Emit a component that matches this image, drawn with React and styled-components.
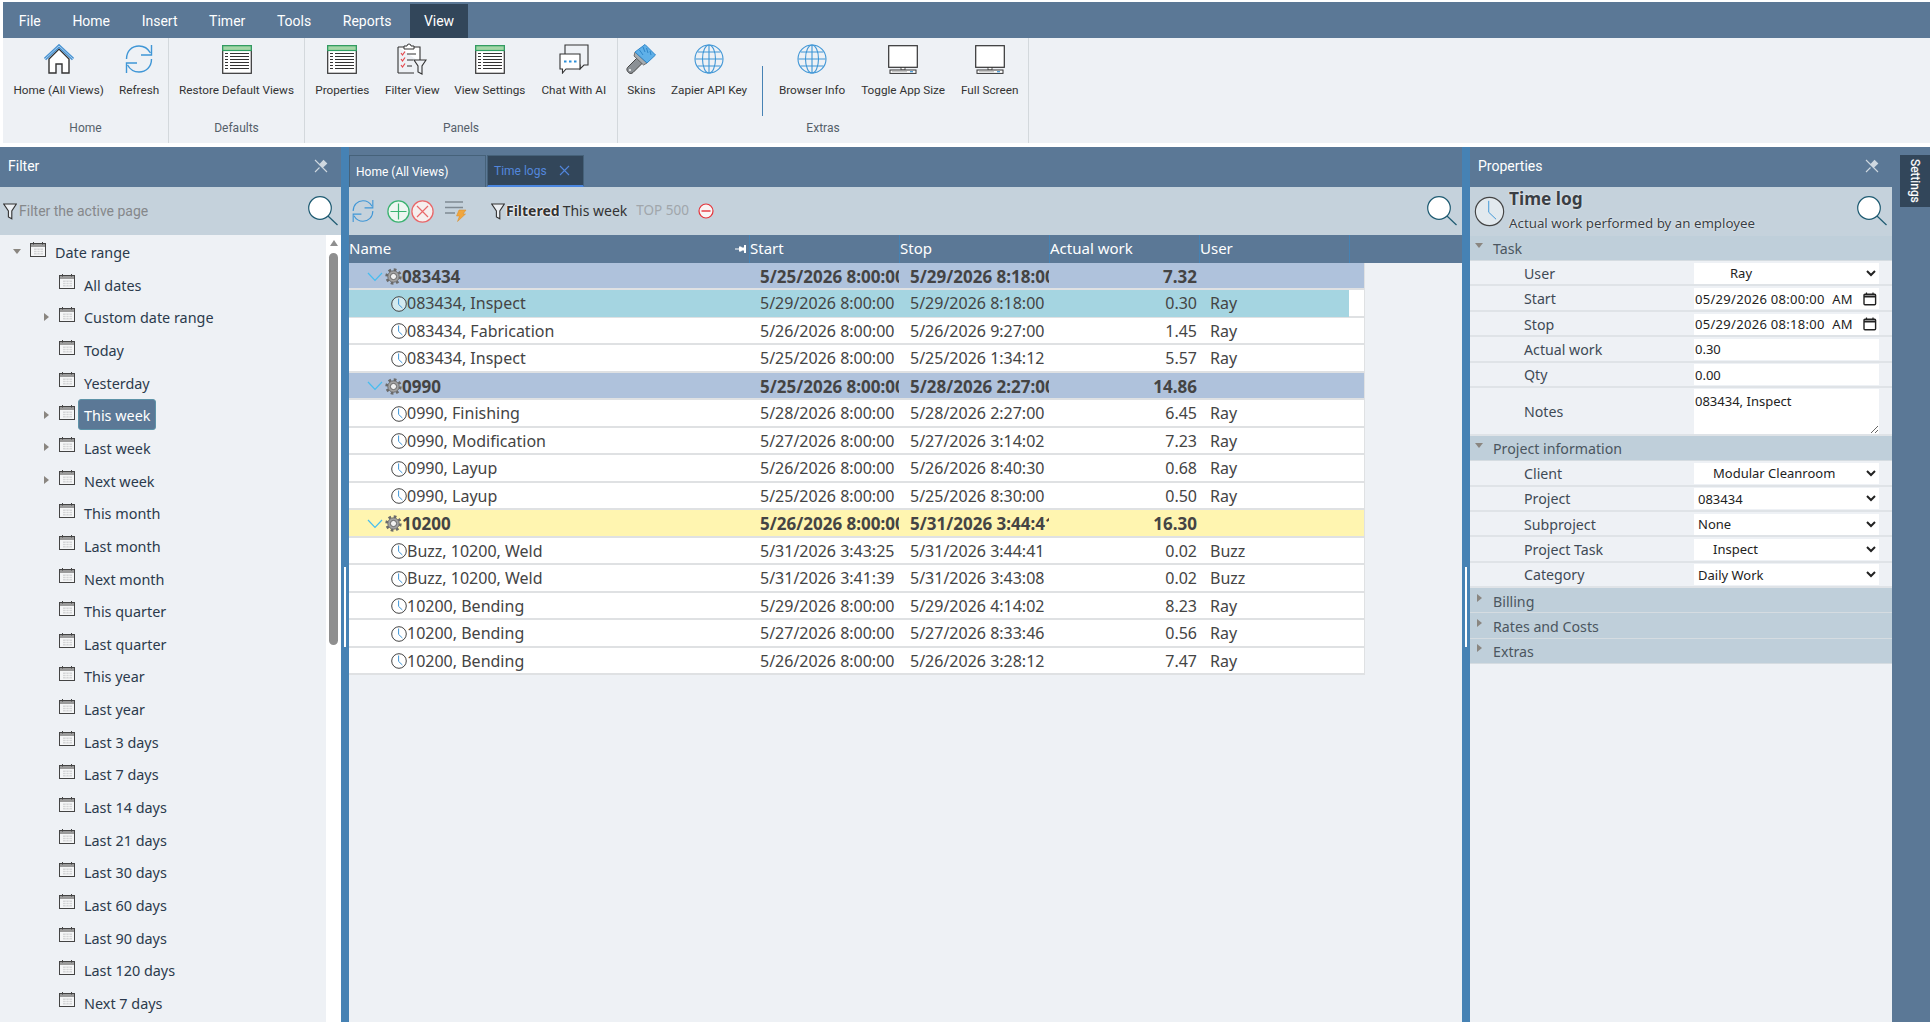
import React from "react";
import styled, { createGlobalStyle } from "styled-components";

const GlobalStyle = createGlobalStyle`
  html, body { margin: 0; padding: 0; background: #fff; }
  body { font-family: "Noto Sans", "Open Sans", sans-serif; overflow: hidden; }
  * { box-sizing: border-box; }
`;

const BLUE = "#5b7896";
const DARK = "#32465a";
const STEEL = "#4682b4";
const PALE = "#eef1f5";
const BAND = "#c5d2dc";

const Page = styled.div`
  width: 1930px;
  height: 1022px;
  display: flex;
  flex-direction: column;
  overflow: hidden;
`;

const Top = styled.div`
  padding: 2px 0 0 3px;
`;

const MenuBar = styled.div`
  height: 36px;
  background: ${BLUE};
  display: flex;
  align-items: flex-end;
`;

const MenuItem = styled.div`
  height: 34px;
  padding: 0 ${(p) => (p.$active ? "14px" : "15.8px")};
  margin-left: ${(p) => (p.$active ? "2.5px" : "0")};
  background: ${(p) => (p.$active ? DARK : "transparent")};
  color: #fff;
  font: 14px/34px Roboto, sans-serif;
`;

const Ribbon = styled.div`
  height: 105px;
  background: ${PALE};
  display: flex;
`;

const RibbonGroup = styled.div`
  display: flex;
  flex-direction: column;
  width: ${(p) => p.$w}px;
  padding: 0 2px;
  border-right: 1px solid #d3d8dc;
`;

const RibbonItems = styled.div`
  flex: 1;
  display: flex;
`;

const RibbonItem = styled.div`
  width: ${(p) => p.$w}px;
  display: flex;
  flex-direction: column;
  align-items: center;
  padding-top: 5px;
`;

const RibbonIcon = styled.div`
  height: 32px;
  display: flex;
  align-items: center;
  justify-content: center;
`;

const RibbonLabel = styled.div`
  margin-top: 7px;
  font: 11.75px/16px Roboto, sans-serif;
  color: #333;
  white-space: nowrap;
`;

const RibbonCaption = styled.div`
  height: 22px;
  text-align: center;
  font: 12px/14px Roboto, sans-serif;
  color: #55606a;
`;

const RibbonDivider = styled.div`
  width: 1px;
  height: 50px;
  margin: 28px 8px 0 7px;
  background: ${STEEL};
`;

const Workspace = styled.div`
  margin-top: 4px;
  flex: 1;
  min-height: 0;
  display: flex;
`;

const Panel = styled.div`
  width: ${(p) => p.$w}px;
  display: flex;
  flex-direction: column;
  background: ${PALE};
`;

const PanelHeader = styled.div`
  height: 40px;
  flex: none;
  background: ${BLUE};
  display: flex;
  align-items: center;
  justify-content: space-between;
  padding: 0 13px 2px 8px;
  color: #fff;
  font: 14px Roboto, sans-serif;
`;

const Band = styled.div`
  height: ${(p) => p.$h || 48}px;
  flex: none;
  background: ${BAND};
  display: flex;
  align-items: center;
`;

const SearchSlot = styled.div`
  margin-left: auto;
  margin-right: ${(p) => p.$right || 3}px;
  display: flex;
`;

const FilterHint = styled.span`
  margin-left: 2px;
  margin-bottom: 1px;
  font: 14px Roboto, sans-serif;
  color: #85888b;
`;

const TreeArea = styled.div`
  flex: 1;
  min-height: 0;
  display: flex;
`;

const Tree = styled.div`
  flex: 1;
  padding-top: 0.3px;
  overflow: hidden;
`;

const TreeRow = styled.div`
  height: 32.65px;
  display: flex;
  align-items: center;
  padding-left: ${(p) => 13 + p.$depth * 29}px;
`;

const ArrowSlot = styled.div`
  width: 17px;
  flex: none;
  display: flex;
  align-items: center;
`;

const TriDown = styled.span`
  border-left: 4px solid transparent;
  border-right: 4px solid transparent;
  border-top: 5px solid #8a8680;
`;

const TriRight = styled.span`
  margin-left: 2px;
  border-top: 4px solid transparent;
  border-bottom: 4px solid transparent;
  border-left: 5px solid #8a8680;
`;

const TreeIcon = styled.div`
  flex: none;
  display: flex;
  margin-bottom: 5px;
`;

const TreeLabel = styled.div`
  margin-left: 3px;
  padding: 0 5px;
  height: 31px;
  line-height: 31px;
  font-size: 14.4px;
  white-space: nowrap;
  border-radius: 3px;
  color: ${(p) => (p.$active ? "#fff" : "#2b3a4c")};
  background: ${(p) => (p.$active ? BLUE : "transparent")};
  border: 1px solid ${(p) => (p.$active ? "#5d93a8" : "transparent")};
`;

const ScrollTrack = styled.div`
  width: 15px;
  flex: none;
  background: #fff;
  padding: 5px 3px 0;
  display: flex;
  flex-direction: column;
  align-items: center;
`;

const ScrollArrow = styled.span`
  border-left: 4.5px solid transparent;
  border-right: 4.5px solid transparent;
  border-bottom: 6px solid #8f8f8f;
`;

const ScrollThumb = styled.div`
  width: 9px;
  height: 392px;
  margin-top: 7px;
  border-radius: 5px;
  background: #8f8f8f;
`;

const Splitter = styled.div`
  width: 8px;
  flex: none;
  background: ${STEEL};
  padding: 420px 0 0 3px;
`;

const Grip = styled.div`
  width: 2px;
  height: 80px;
  background: #fff;
`;

const Center = styled.div`
  flex: 1;
  min-width: 0;
  display: flex;
  flex-direction: column;
  background: ${PALE};
`;

const TabStrip = styled.div`
  height: 40px;
  flex: none;
  background: ${BLUE};
  display: flex;
  align-items: flex-end;
`;

const Tab = styled.div`
  width: ${(p) => p.$w}px;
  height: 32px;
  margin-right: 1px;
  padding-left: 6px;
  display: flex;
  align-items: center;
  font: 12px Roboto, sans-serif;
  color: ${(p) => (p.$active ? "#5286dc" : "#fff")};
  background: ${(p) => (p.$active ? DARK : BLUE)};
  border: 1px solid #46627a;
  border-bottom: ${(p) => (p.$active ? "2px solid #4a86e0" : "0")};
`;

const TabClose = styled.span`
  display: flex;
  margin-left: 12px;
`;

const ToolGap = styled.span`
  display: inline-block;
  flex: none;
  width: ${(p) => p.$w}px;
`;

const ToolIcon = styled.span`
  display: flex;
  flex: none;
`;

const FilteredWord = styled.span`
  margin-bottom: 2px;
  font-size: 14px;
  font-weight: 700;
  color: #333;
  text-shadow: 0 0 2px #fff, 0 0 2px #fff, 0 0 1px #fff;
`;

const FilteredValue = styled.span`
  margin: 0 0 2px 3px;
  font-size: 14px;
  color: #333;
`;

const TopLimit = styled.span`
  margin: 0 0 2px 9px;
  font-size: 13.5px;
  color: #a0a6ab;
`;

const Columns = `400px 150px 150px 150px 150px 16px`;

const GridHead = styled.div`
  height: 28px;
  flex: none;
  background: ${BLUE};
  display: grid;
  grid-template-columns: ${Columns};
  font-size: 15px;
  line-height: 27px;
  color: #fff;
`;

const HeadCell = styled.div`
  position: relative;
  border-left: ${(p) => (p.$first ? "0" : `1px solid ${STEEL}`)};
`;

const HeadPin = styled.span`
  position: absolute;
  right: 2px;
  top: 9px;
  display: flex;
`;

const GridBody = styled.div`
  width: 1016px;
`;

const GridRow = styled.div`
  height: 27.47px;
  display: grid;
  grid-template-columns: ${Columns};
  border-bottom: 2px solid #dfe1e3;
  border-right: 1px solid #dfe1e3;
  font-size: ${(p) => (p.$bold ? 17 : 16)}px;
  line-height: 27px;
  color: #444;
  background: ${(p) => p.$bg || "#fff"};
  font-weight: ${(p) => (p.$bold ? 700 : 400)};
`;

const Cell = styled.div`
  overflow: hidden;
  white-space: nowrap;
  padding: ${(p) => p.$pad || "0 1px 0 11px"};
  text-align: ${(p) => p.$align || "left"};
  background: ${(p) => p.$bg || "transparent"};
`;

const NameCell = styled.div`
  display: flex;
  align-items: center;
  padding-left: ${(p) => (p.$group ? 18 : 42)}px;
  background: ${(p) => p.$bg || "transparent"};
`;

const TimeIcon = styled.span`
  display: flex;
  flex: none;
`;

const GearIcon = styled.span`
  display: flex;
  flex: none;
  margin-left: 2px;
`;

const Side = styled.div`
  width: 38px;
  flex: none;
  background: ${BLUE};
  padding: 8px 0 0 8px;
`;

const SideTab = styled.div`
  height: 52px;
  background: ${DARK};
  color: #fff;
  font: 12px/30px Roboto, sans-serif;
  writing-mode: vertical-rl;
  text-align: center;
  -webkit-text-stroke: 0.2px #fff;
`;

const PropTitle = styled.div`
  margin-left: 4px;
  display: flex;
  flex-direction: column;
`;

const TitleText = styled.div`
  font-size: 17.3px;
  line-height: 24px;
  font-weight: 700;
  color: #3a3f45;
  text-shadow: 0 0 2px #fff;
`;

const SubText = styled.div`
  font-size: 13.3px;
  line-height: 24px;
  color: #3a3f45;
  text-shadow: 0 0 2px #fff;
`;

const Section = styled.div`
  height: 25.4px;
  background: #bfcfda;
  border-bottom: 1px solid #d5dce1;
  display: flex;
  align-items: center;
  padding: 1.5px 0 0 5px;
  font-size: 14.2px;
  color: #4b5660;
`;

const SectionArrow = styled.span`
  width: 18px;
  display: flex;
  align-items: center;
  padding-bottom: 7px;
`;

const PropRow = styled.div`
  height: ${(p) => p.$h || 25.4}px;
  display: grid;
  grid-template-columns: 224px 185px;
  align-items: center;
  padding-top: 1px;
  border-bottom: 2px solid #dfe3e7;
`;

const PropLabel = styled.div`
  padding-left: 54px;
  font-size: 14.2px;
  color: #3f4a55;
`;

const baseField = `
  width: 185px;
  height: 21px;
  border: 0;
  outline: 0;
  background: #fff;
  color: #222;
  font-family: "Noto Sans", sans-serif;
  font-size: 13px;
`;

const SelectField = styled.select`
  ${baseField}
  padding-left: ${(p) => p.$indent || 0}px;
`;

const TextField = styled.input`
  ${baseField}
  padding: 0 1px;
`;

const DateBox = styled.div`
  width: 185px;
  height: 21px;
  display: flex;
  align-items: center;
  background: #fff;
  padding-right: 2px;
`;

const DateText = styled.input`
  ${baseField}
  flex: 1;
  min-width: 0;
  padding: 0 1px;
  letter-spacing: 0.3px;
  background: transparent;
`;

const NotesField = styled.textarea`
  ${baseField}
  height: 45px;
  padding: 4px 1px 0;
  line-height: 17px;
  resize: vertical;
  display: block;
`;

const Search = ({ size = 30 }) => (
  <svg width={size} height={size} viewBox="0 0 30 30">
    <circle cx="12" cy="12" r="11.3" fill="#fff" stroke="#1e5b72" strokeWidth="1.2" />
    <path d="M20 20 L29.5 29" stroke="#1e5b72" strokeWidth="1.2" />
  </svg>
);

const Pin = () => (
  <svg width="14" height="14" viewBox="0 0 14 14">
    <path d="M1 1 L13 13 M1 13 L5.5 8.5" stroke="#cfd8e0" strokeWidth="1.1" fill="none" />
    <path d="M5 5.5 L9.5 .8 L13.4 4.6 L8.6 9 Z" fill="#cfd8e0" />
  </svg>
);

const Funnel = () => (
  <svg width="14" height="17" viewBox="0 0 14 17">
    <path d="M.7 1 H13.3 L8.8 8 V15.8 L5.4 14 V8 Z" fill="#fff" fillOpacity=".65" stroke="#333" strokeWidth="1.1" />
  </svg>
);

const Refresh = ({ w = 28, h = 30 }) => (
  <svg width={w} height={h} viewBox="0 0 28 30" fill="none" stroke="#3f96d6" strokeWidth="1.4">
    <path d="M1.5 15 C1.5 7 7 2 14 2 C19 2 23 4.5 25.5 9" />
    <path d="M26.5 1 V11 H16" />
    <path d="M26.5 15 C26.5 23 21 28 14 28 C9 28 5 25.5 2.5 21" />
    <path d="M1.5 29 V19 H12" />
  </svg>
);

const HomeGlyph = () => (
  <svg width="30" height="30" viewBox="0 0 30 30">
    <path d="M5 15 L15 5 L25 15 V29 H18 V20 H12 V29 H5 Z" fill="#fff" stroke="#333" strokeWidth="1.4" />
    <path d="M1 15 L15 2 L29 15" fill="none" stroke="#4a93d2" strokeWidth="3.2" />
    <path d="M1 15 L15 2 L29 15" fill="none" stroke="#a8d0ef" strokeWidth="1" />
  </svg>
);

const TableGlyph = () => (
  <svg width="30" height="29" viewBox="0 0 30 29">
    <rect x=".7" y=".7" width="28.6" height="27.6" fill="#fff" stroke="#333" strokeWidth="1.2" />
    <rect x=".7" y=".7" width="28.6" height="4.8" fill="#a5d6a7" stroke="#2ea062" strokeWidth="1.2" />
    {[8.5, 11.5, 14.5, 17.5, 20.5, 23.5].map((y) => (
      <path key={y} d={`M3 ${y} H6 M8 ${y} H27`} stroke="#333" strokeWidth="1" />
    ))}
  </svg>
);

const ClipboardGlyph = () => (
  <svg width="30" height="32" viewBox="0 0 30 32">
    <path d="M1 4 H23 V19 M17 30 H1 Z" fill="#fff" stroke="#333" strokeWidth="1.1" />
    <path d="M1 4 V30" stroke="#333" strokeWidth="1.1" />
    <path d="M7 5 V3 H10 A2 2 0 0 1 14 3 H17 V6 H7 Z" fill="#fff" stroke="#333" strokeWidth="1" />
    <path d="M4 10 L5.5 12 L8 8.5 M4 16 L5.5 18 L8 14.5 M4 22 L5.5 24 L8 20.5" fill="none" stroke="#e5484d" strokeWidth="1.2" />
    <path d="M10 11 H19 M10 17 H16 M10 23 H15" stroke="#333" strokeWidth="1.1" />
    <path d="M17 17 H29 L25 23 V31 L21 29 V23 Z" fill={PALE} stroke="#333" strokeWidth="1.1" />
  </svg>
);

const ChatGlyph = () => (
  <svg width="30" height="30" viewBox="0 0 30 30">
    <path d="M6 1 H29 V21 H25 L21 25 V21 H6 Z" fill={PALE} stroke="#333" strokeWidth="1.1" />
    <path d="M1 10 H21 V25 H7 L3.5 29 V25 H1 Z" fill="#fff" stroke="#333" strokeWidth="1.1" />
    <path d="M5 17.5 H7.5 M10 17.5 H12.5 M15 17.5 H17.5" stroke="#2e8fd8" strokeWidth="2" />
  </svg>
);

const BrushGlyph = () => (
  <svg width="30" height="30" viewBox="0 0 30 30">
    <path d="M12 13 L2 23 C0 25 1 27 2.5 28.5 C4 30 6 29.5 7 28.5 L17.5 18 Z" fill="#8b9095" stroke="#444" strokeWidth="1" />
    <path d="M9 8 L21 19 L17.5 21 L8 12 Z" fill="#a6abaf" stroke="#555" strokeWidth=".8" />
    <path d="M9 8 L19 .5 L29.5 11 L21 19 Z" fill="#5fb0e8" stroke="#2f86c9" strokeWidth="1" />
    <path d="M17 3 L19 8 M20.5 4 L22 9 M24 7 L25 11 M13.5 6 L17 11" stroke="#2f86c9" strokeWidth="1" />
    <circle cx="4" cy="26" r="1.1" fill="#eee" />
  </svg>
);

const GlobeGlyph = () => (
  <svg width="30" height="30" viewBox="0 0 30 30" fill="none" stroke="#3f96d6" strokeWidth="1.1">
    <circle cx="15" cy="15" r="14" />
    <ellipse cx="15" cy="15" rx="6.5" ry="14" />
    <path d="M15 1 V29 M1.5 15 H28.5 M3.5 8 H26.5 M3.5 22 H26.5" />
  </svg>
);

const MonitorGlyph = () => (
  <svg width="30" height="29" viewBox="0 0 30 29">
    <rect x=".7" y=".7" width="28.6" height="21.6" fill="#fff" stroke="#333" strokeWidth="1.2" />
    <rect x="13" y="22.5" width="4" height="2.5" fill="#fff" stroke="#333" strokeWidth=".8" />
    <rect x="2" y="25" width="26" height="3.4" fill="#fff" stroke="#333" strokeWidth="1" />
    <path d="M22 26.7 H25" stroke="#3f96d6" strokeWidth="1.2" />
    <path d="M4 26.7 H19" stroke="#bbb" strokeWidth="1" />
  </svg>
);

const CalendarIcon = () => (
  <svg width="16" height="15" viewBox="0 0 16 15">
    <rect x=".5" y="1.5" width="15" height="13" fill="#f5f6f7" stroke="#444" />
    <rect x="1" y="2" width="14" height="3" fill="#9a9a9a" />
    <path d="M3.5 0 V2.5 M12.5 0 V2.5" stroke="#444" />
    <rect x="4" y="6.5" width="9" height="6" fill="#d5d6d8" />
    <path d="M4 8.5 H13 M4 10.5 H13 M7 6.5 V12.5 M10 6.5 V12.5" stroke="#fafafa" strokeWidth=".7" />
  </svg>
);

const PickerIcon = () => (
  <svg width="14" height="14" viewBox="0 0 14 14" fill="none">
    <rect x="1" y="2.2" width="11.6" height="10.6" rx="1" stroke="#222" strokeWidth="1.4" />
    <path d="M1 4.5 H12.6" stroke="#222" strokeWidth="2" />
    <path d="M3.5 .5 V2.5 M10 .5 V2.5" stroke="#222" strokeWidth="1.2" />
  </svg>
);

const ClockIcon = ({ size = 16 }) => (
  <svg width={size} height={size} viewBox="0 0 16 16" fill="none">
    <circle cx="8" cy="8" r="7.3" fill="#fff" fillOpacity=".5" stroke="#444" strokeWidth={size > 20 ? 0.6 : 1} />
    <path d="M7.6 2.5 V8.4 L11.4 12" stroke="#3f96d6" strokeWidth={size > 20 ? 0.5 : 1} />
  </svg>
);

const Chevron = () => (
  <svg width="16" height="10" viewBox="0 0 16 10" fill="none">
    <path d="M1 1 L8 8.3 L15 1" stroke="#45bdf0" strokeWidth="1.2" />
  </svg>
);

const Gear = () => (
  <svg width="17" height="17" viewBox="0 0 17 17" fill="none">
    <circle cx="8.5" cy="8.5" r="6.9" stroke="#6a6a6a" strokeWidth="2.6" strokeDasharray="2.7 2.72" />
    <circle cx="8.5" cy="8.5" r="5.7" fill="#a3a3a3" stroke="#666" strokeWidth=".9" />
    <circle cx="8.5" cy="8.5" r="3.1" fill="#f2f2f2" stroke="#5a5a5a" strokeWidth=".9" />
  </svg>
);

const AddCircle = () => (
  <svg width="23" height="23" viewBox="0 0 23 23" fill="none">
    <circle cx="11.5" cy="11.5" r="10.6" fill="#eef6f1" stroke="#3cb371" strokeWidth="1.3" />
    <path d="M11.5 3.5 V19.5 M3.5 11.5 H19.5" stroke="#3cb371" strokeWidth="1.2" />
  </svg>
);

const CancelCircle = () => (
  <svg width="23" height="23" viewBox="0 0 23 23" fill="none">
    <circle cx="11.5" cy="11.5" r="10.6" fill="#f6eeee" stroke="#e9686a" strokeWidth="1.3" />
    <path d="M6 6 L17 17 M17 6 L6 17" stroke="#e9686a" strokeWidth="1.2" />
  </svg>
);

const BoltLines = () => (
  <svg width="22" height="21" viewBox="0 0 22 21" fill="none">
    <path d="M0 1 H18 M0 6.5 H18 M0 12 H10" stroke="#7f8a93" strokeWidth="1.3" />
    <path d="M14 9 H21 L18 13 H20.5 L12.5 20.5 L14.5 15 H11.5 Z" fill="#f0a63e" stroke="#d98a25" strokeWidth=".5" />
  </svg>
);

const MinusCircle = () => (
  <svg width="16" height="16" viewBox="0 0 16 16" fill="none">
    <circle cx="8" cy="8" r="7" fill="#f9f5f5" stroke="#e5333a" strokeWidth="1.2" />
    <path d="M3.5 8 H12.5" stroke="#e5333a" strokeWidth="1.4" />
  </svg>
);

const TabX = () => (
  <svg width="11" height="11" viewBox="0 0 11 11">
    <path d="M1 1 L10 10 M10 1 L1 10" stroke="#5286dc" strokeWidth="1.1" />
  </svg>
);

const HeadPinIcon = () => (
  <svg width="12" height="10" viewBox="0 0 12 10" fill="#fff">
    <path d="M0 4.6 H5 V5.6 H0 Z M4 2.5 H6 L7 3.5 H9 V1 H11 V9 H9 V6.5 H7 L6 7.5 H4 Z" />
  </svg>
);

const menu = ["File", "Home", "Insert", "Timer", "Tools", "Reports"];

const ribbon = [
  {
    caption: "Home",
    w: 166,
    items: [
      { label: "Home (All Views)", w: 108, icon: <HomeGlyph /> },
      { label: "Refresh", w: 54, icon: <Refresh /> },
    ],
  },
  {
    caption: "Defaults",
    w: 136,
    items: [{ label: "Restore Default Views", w: 131, icon: <TableGlyph /> }],
  },
  {
    caption: "Panels",
    w: 313,
    items: [
      { label: "Properties", w: 71, icon: <TableGlyph /> },
      { label: "Filter View", w: 70, icon: <ClipboardGlyph /> },
      { label: "View Settings", w: 86, icon: <TableGlyph /> },
      { label: "Chat With AI", w: 83, icon: <ChatGlyph /> },
    ],
  },
];

const extras = {
  before: [
    { label: "Skins", w: 43, icon: <BrushGlyph /> },
    { label: "Zapier API Key", w: 93, icon: <GlobeGlyph /> },
  ],
  after: [
    { label: "Browser Info", w: 82, icon: <GlobeGlyph /> },
    { label: "Toggle App Size", w: 101, icon: <MonitorGlyph /> },
    { label: "Full Screen", w: 73, icon: <MonitorGlyph /> },
  ],
};

const dateRanges = [
  ["All dates"],
  ["Custom date range", true],
  ["Today"],
  ["Yesterday"],
  ["This week", true, true],
  ["Last week", true],
  ["Next week", true],
  ["This month"],
  ["Last month"],
  ["Next month"],
  ["This quarter"],
  ["Last quarter"],
  ["This year"],
  ["Last year"],
  ["Last 3 days"],
  ["Last 7 days"],
  ["Last 14 days"],
  ["Last 21 days"],
  ["Last 30 days"],
  ["Last 60 days"],
  ["Last 90 days"],
  ["Last 120 days"],
  ["Next 7 days"],
];

const logs = [
  { group: true, bg: "#afc2dc", name: "083434", start: "5/25/2026 8:00:00", stop: "5/29/2026 8:18:00", work: "7.32" },
  { selected: true, name: "083434, Inspect", start: "5/29/2026 8:00:00", stop: "5/29/2026 8:18:00", work: "0.30", user: "Ray" },
  { name: "083434, Fabrication", start: "5/26/2026 8:00:00", stop: "5/26/2026 9:27:00", work: "1.45", user: "Ray" },
  { name: "083434, Inspect", start: "5/25/2026 8:00:00", stop: "5/25/2026 1:34:12", work: "5.57", user: "Ray" },
  { group: true, bg: "#afc2dc", name: "0990", start: "5/25/2026 8:00:00", stop: "5/28/2026 2:27:00", work: "14.86" },
  { name: "0990, Finishing", start: "5/28/2026 8:00:00", stop: "5/28/2026 2:27:00", work: "6.45", user: "Ray" },
  { name: "0990, Modification", start: "5/27/2026 8:00:00", stop: "5/27/2026 3:14:02", work: "7.23", user: "Ray" },
  { name: "0990, Layup", start: "5/26/2026 8:00:00", stop: "5/26/2026 8:40:30", work: "0.68", user: "Ray" },
  { name: "0990, Layup", start: "5/25/2026 8:00:00", stop: "5/25/2026 8:30:00", work: "0.50", user: "Ray" },
  { group: true, bg: "#fff5b0", name: "10200", start: "5/26/2026 8:00:00", stop: "5/31/2026 3:44:41", work: "16.30" },
  { name: "Buzz, 10200, Weld", start: "5/31/2026 3:43:25", stop: "5/31/2026 3:44:41", work: "0.02", user: "Buzz" },
  { name: "Buzz, 10200, Weld", start: "5/31/2026 3:41:39", stop: "5/31/2026 3:43:08", work: "0.02", user: "Buzz" },
  { name: "10200, Bending", start: "5/29/2026 8:00:00", stop: "5/29/2026 4:14:02", work: "8.23", user: "Ray" },
  { name: "10200, Bending", start: "5/27/2026 8:00:00", stop: "5/27/2026 8:33:46", work: "0.56", user: "Ray" },
  { name: "10200, Bending", start: "5/26/2026 8:00:00", stop: "5/26/2026 3:28:12", work: "7.47", user: "Ray" },
];

const noop = () => {};

const Choice = ({ value, indent }) => (
  <SelectField value={value} onChange={noop} $indent={indent}>
    <option>{value}</option>
  </SelectField>
);

const DateInput = ({ value }) => (
  <DateBox>
    <DateText value={value} onChange={noop} />
    <PickerIcon />
  </DateBox>
);

const RibbonButton = ({ item }) => (
  <RibbonItem $w={item.w}>
    <RibbonIcon>{item.icon}</RibbonIcon>
    <RibbonLabel>{item.label}</RibbonLabel>
  </RibbonItem>
);

const FilterPanel = () => (
  <Panel $w={341}>
    <PanelHeader>
      Filter
      <Pin />
    </PanelHeader>
    <Band>
      <ToolGap $w={3} />
      <Funnel />
      <FilterHint>Filter the active page</FilterHint>
      <SearchSlot>
        <Search />
      </SearchSlot>
    </Band>
    <TreeArea>
      <Tree>
        <TreeRow $depth={0}>
          <ArrowSlot>
            <TriDown />
          </ArrowSlot>
          <TreeIcon>
            <CalendarIcon />
          </TreeIcon>
          <TreeLabel>Date range</TreeLabel>
        </TreeRow>
        {dateRanges.map(([label, expandable, active]) => (
          <TreeRow key={label} $depth={1}>
            <ArrowSlot>{expandable && <TriRight />}</ArrowSlot>
            <TreeIcon>
              <CalendarIcon />
            </TreeIcon>
            <TreeLabel $active={active}>{label}</TreeLabel>
          </TreeRow>
        ))}
      </Tree>
      <ScrollTrack>
        <ScrollArrow />
        <ScrollThumb />
      </ScrollTrack>
    </TreeArea>
  </Panel>
);

const LogGrid = () => (
  <Center>
    <TabStrip>
      <Tab $w={137}>Home (All Views)</Tab>
      <Tab $w={97} $active>
        Time logs
        <TabClose>
          <TabX />
        </TabClose>
      </Tab>
    </TabStrip>
    <Band>
      <ToolGap $w={3} />
      <ToolIcon>
        <Refresh w={22} h={24} />
      </ToolIcon>
      <ToolGap $w={13} />
      <ToolIcon>
        <AddCircle />
      </ToolIcon>
      <ToolGap $w={1} />
      <ToolIcon>
        <CancelCircle />
      </ToolIcon>
      <ToolGap $w={11} />
      <ToolIcon>
        <BoltLines />
      </ToolIcon>
      <ToolGap $w={24} />
      <Funnel />
      <ToolGap $w={1} />
      <FilteredWord>Filtered</FilteredWord>
      <FilteredValue>This week</FilteredValue>
      <TopLimit>TOP 500</TopLimit>
      <ToolGap $w={9} />
      <ToolIcon>
        <MinusCircle />
      </ToolIcon>
      <SearchSlot $right={5}>
        <Search />
      </SearchSlot>
    </Band>
    <GridHead>
      <HeadCell $first>
        Name
        <HeadPin>
          <HeadPinIcon />
        </HeadPin>
      </HeadCell>
      <HeadCell>Start</HeadCell>
      <HeadCell>Stop</HeadCell>
      <HeadCell>Actual work</HeadCell>
      <HeadCell>User</HeadCell>
      <HeadCell />
    </GridHead>
    <GridBody>
      {logs.map((row, i) => {
        const tint = row.selected ? "#a5d5e1" : undefined;
        return (
          <GridRow key={i} $bg={row.bg} $bold={row.group}>
            <NameCell $group={row.group} $bg={tint}>
              {row.group ? (
                <>
                  <Chevron />
                  <GearIcon>
                    <Gear />
                  </GearIcon>
                </>
              ) : (
                <TimeIcon>
                  <ClockIcon />
                </TimeIcon>
              )}
              {row.name}
            </NameCell>
            <Cell $bg={tint}>{row.start}</Cell>
            <Cell $bg={tint}>{row.stop}</Cell>
            <Cell $bg={tint} $align="right" $pad="0 2px 0 0">
              {row.work}
            </Cell>
            <Cell $bg={tint}>{row.user}</Cell>
            <Cell />
          </GridRow>
        );
      })}
    </GridBody>
  </Center>
);

const PropertiesPanel = () => (
  <Panel $w={422}>
    <PanelHeader>
      Properties
      <Pin />
    </PanelHeader>
    <Band $h={48.7}>
      <ToolGap $w={4} />
      <ClockIcon size={31} />
      <PropTitle>
        <TitleText>Time log</TitleText>
        <SubText>Actual work performed by an employee</SubText>
      </PropTitle>
      <SearchSlot $right={5}>
        <Search />
      </SearchSlot>
    </Band>
    <Section>
      <SectionArrow>
        <TriDown />
      </SectionArrow>
      Task
    </Section>
    <PropRow>
      <PropLabel>User</PropLabel>
      <Choice value="Ray" indent={32} />
    </PropRow>
    <PropRow>
      <PropLabel>Start</PropLabel>
      <DateInput value="05/29/2026 08:00:00  AM" />
    </PropRow>
    <PropRow>
      <PropLabel>Stop</PropLabel>
      <DateInput value="05/29/2026 08:18:00  AM" />
    </PropRow>
    <PropRow>
      <PropLabel>Actual work</PropLabel>
      <TextField value="0.30" onChange={noop} />
    </PropRow>
    <PropRow>
      <PropLabel>Qty</PropLabel>
      <TextField value="0.00" onChange={noop} />
    </PropRow>
    <PropRow $h={47.7}>
      <PropLabel>Notes</PropLabel>
      <NotesField value="083434, Inspect" onChange={noop} />
    </PropRow>
    <Section>
      <SectionArrow>
        <TriDown />
      </SectionArrow>
      Project information
    </Section>
    <PropRow>
      <PropLabel>Client</PropLabel>
      <Choice value="Modular Cleanroom" indent={15} />
    </PropRow>
    <PropRow>
      <PropLabel>Project</PropLabel>
      <Choice value="083434" />
    </PropRow>
    <PropRow>
      <PropLabel>Subproject</PropLabel>
      <Choice value="None" />
    </PropRow>
    <PropRow>
      <PropLabel>Project Task</PropLabel>
      <Choice value="Inspect" indent={15} />
    </PropRow>
    <PropRow>
      <PropLabel>Category</PropLabel>
      <Choice value="Daily Work" />
    </PropRow>
    {["Billing", "Rates and Costs", "Extras"].map((name) => (
      <Section key={name}>
        <SectionArrow>
          <TriRight />
        </SectionArrow>
        {name}
      </Section>
    ))}
  </Panel>
);

export default function App() {
  return (
    <Page>
      <GlobalStyle />
      <Top>
        <MenuBar>
          {menu.map((name) => (
            <MenuItem key={name}>{name}</MenuItem>
          ))}
          <MenuItem $active>View</MenuItem>
        </MenuBar>
        <Ribbon>
          {ribbon.map((group) => (
            <RibbonGroup key={group.caption} $w={group.w}>
              <RibbonItems>
                {group.items.map((item) => (
                  <RibbonButton key={item.label} item={item} />
                ))}
              </RibbonItems>
              <RibbonCaption>{group.caption}</RibbonCaption>
            </RibbonGroup>
          ))}
          <RibbonGroup $w={411}>
            <RibbonItems>
              {extras.before.map((item) => (
                <RibbonButton key={item.label} item={item} />
              ))}
              <RibbonDivider />
              {extras.after.map((item) => (
                <RibbonButton key={item.label} item={item} />
              ))}
            </RibbonItems>
            <RibbonCaption>Extras</RibbonCaption>
          </RibbonGroup>
        </Ribbon>
      </Top>
      <Workspace>
        <FilterPanel />
        <Splitter>
          <Grip />
        </Splitter>
        <LogGrid />
        <Splitter>
          <Grip />
        </Splitter>
        <PropertiesPanel />
        <Side>
          <SideTab>Settings</SideTab>
        </Side>
      </Workspace>
    </Page>
  );
}
